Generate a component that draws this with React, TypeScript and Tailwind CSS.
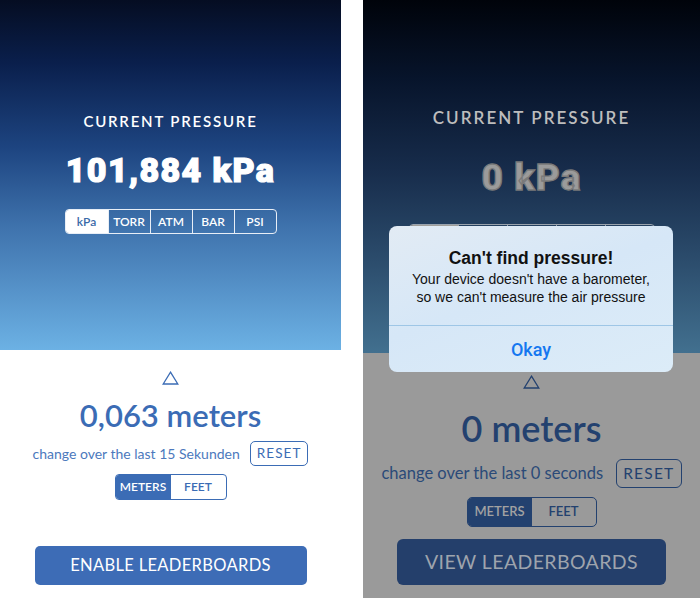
import React from 'react';

const UNITS = ['kPa', 'TORR', 'ATM', 'BAR', 'PSI'];

const Triangle = ({ color }: { color: string }) => (
  <svg width="17" height="14" viewBox="0 0 17 14" fill="none">
    <path d="M8.5 1.2 L15.8 13 H1.2 Z" stroke={color} strokeWidth="1.3" strokeLinejoin="miter" />
  </svg>
);

const LeftScreen = () => (
  <div className="w-[341px] flex flex-col bg-white">
    {/* pressure header */}
    <div className="h-[350px] flex flex-col items-center pt-[111px] bg-[linear-gradient(180deg,#050d22_0%,#0a1f4c_18%,#1d4480_42%,#3f73ad_65%,#6cb1e4_100%)]">
      <div className="text-[15px] leading-[20px] font-semibold tracking-[0.12em] text-white">CURRENT PRESSURE</div>
      <div className="mt-[21px] text-[34px] leading-[36px] font-black text-white tracking-[0.04em] font-['Roboto',sans-serif] [-webkit-text-stroke:1.2px_#ffffff]">101,884 kPa</div>
      <div className="mt-[21px] flex h-[25px] border border-[#e8eef6] rounded-[4px] overflow-hidden">
        {UNITS.map((u, i) => (
          <div
            key={u}
            className={`w-[42px] flex items-center justify-center text-[12px] font-semibold ${i > 0 ? 'border-l border-[#e8eef6]' : ''} ${i === 0 ? 'bg-white text-[#3a6aa8]' : 'text-white'}`}
          >
            {u}
          </div>
        ))}
      </div>
    </div>

    {/* altitude change */}
    <div className="flex flex-col items-center pt-[21px] text-[#3b6cb5]">
      <Triangle color="#3b6cb5" />
      <div className="mt-[13px] text-[31px] leading-[34px] font-semibold">0,063 meters</div>
      <div className="mt-[9px] flex items-center gap-[10px]">
        <span className="text-[14px] text-[#4c79bd]">change over the last 15 Sekunden</span>
        <span className="h-[25px] px-[6px] flex items-center border border-[#3b6cb5] rounded-[5px] text-[13.5px] tracking-[0.08em]">RESET</span>
      </div>
      <div className="mt-[8px] flex h-[26px] border border-[#3b6cb5] rounded-[4px] overflow-hidden text-[12px] font-semibold">
        <div className="w-[55px] bg-[#3b6cb5] text-white flex items-center justify-center">METERS</div>
        <div className="w-[55px] flex items-center justify-center">FEET</div>
      </div>
      <div className="mt-[46px] w-[272px] h-[39px] rounded-[5px] bg-[#3d6cb6] text-white flex items-center justify-center text-[16.5px] tracking-[0.02em]">
        ENABLE LEADERBOARDS
      </div>
    </div>
  </div>
);

const RightScreen = () => (
  <div className="relative w-[337px] flex flex-col bg-[#9a9a9a]">
    <div className="h-[353px] flex flex-col items-center pt-[106px] bg-[linear-gradient(180deg,#00030a_0%,#07142b_22%,#172c4b_48%,#2a4a6a_72%,#42708f_100%)]">
      <div className="text-[17px] leading-[24px] font-semibold tracking-[0.12em] text-[#bdbdbd]">CURRENT PRESSURE</div>
      <div className="mt-[28px] text-[37px] leading-[40px] font-black text-[#9b9b9b] tracking-[0.03em] font-['Roboto',sans-serif] [-webkit-text-stroke:1.3px_#7a7a7a]">0 kPa</div>
      <div className="mt-[26px] flex h-[29px] w-[246px] border border-[#9aa3ad] rounded-[4px] overflow-hidden">
        {UNITS.map((u, i) => (
          <div key={u} className={`flex-1 ${i > 0 ? 'border-l border-[#9aa3ad]' : ''} ${i === 0 ? 'bg-[#a19f9b]' : ''}`} />
        ))}
      </div>
    </div>

    <div className="flex flex-col items-center pt-[22px] text-[#23416f]">
      <Triangle color="#23416f" />
      <div className="mt-[19px] text-[36px] leading-[40px] font-semibold">0 meters</div>
      <div className="mt-[11px] flex items-center gap-[13px]">
        <span className="text-[16.5px] text-[#2b4a78]">change over the last 0 seconds</span>
        <span className="h-[29px] px-[6px] flex items-center border border-[#23416f] rounded-[6px] text-[15.5px] tracking-[0.08em]">RESET</span>
      </div>
      <div className="mt-[9px] flex h-[30px] border border-[#23416f] rounded-[5px] overflow-hidden text-[13px] font-semibold">
        <div className="w-[64px] bg-[#23416f] text-[#a2a2a2] flex items-center justify-center">METERS</div>
        <div className="w-[64px] flex items-center justify-center">FEET</div>
      </div>
      <div className="mt-[12px] w-[269px] h-[46px] rounded-[6px] bg-[#243f6b] text-[#9ea4ad] flex items-center justify-center text-[19.5px] tracking-[0.02em]">
        VIEW LEADERBOARDS
      </div>
    </div>

    {/* alert overlay */}
    <div className="absolute left-[26px] top-[226px] w-[284px] h-[146px] rounded-[8px] bg-[linear-gradient(160deg,#e2ebf4_0%,#d6e7f7_45%,#dcecf8_100%)] flex flex-col font-['Liberation_Sans',Arial,sans-serif]">
      <div className="flex-1 flex flex-col items-center pt-[21px]">
        <div className="text-[17.5px] leading-[22px] font-bold text-[#111]">Can't find pressure!</div>
        <div className="mt-[1px] text-[14px] leading-[18px] text-[#111] text-center">
          Your device doesn't have a barometer,<br />so we can't measure the air pressure
        </div>
      </div>
      <div className="h-[47px] border-t border-[#9ec6e6] flex items-center justify-center text-[18px] text-[#1477f0] font-['Roboto',sans-serif] font-medium">
        Okay
      </div>
    </div>
  </div>
);

export default function App() {
  return (
    <div className="w-[700px] h-[598px] flex justify-between bg-white overflow-hidden font-['Lato','Noto_Sans',sans-serif]">
      <LeftScreen />
      <RightScreen />
    </div>
  );
}
